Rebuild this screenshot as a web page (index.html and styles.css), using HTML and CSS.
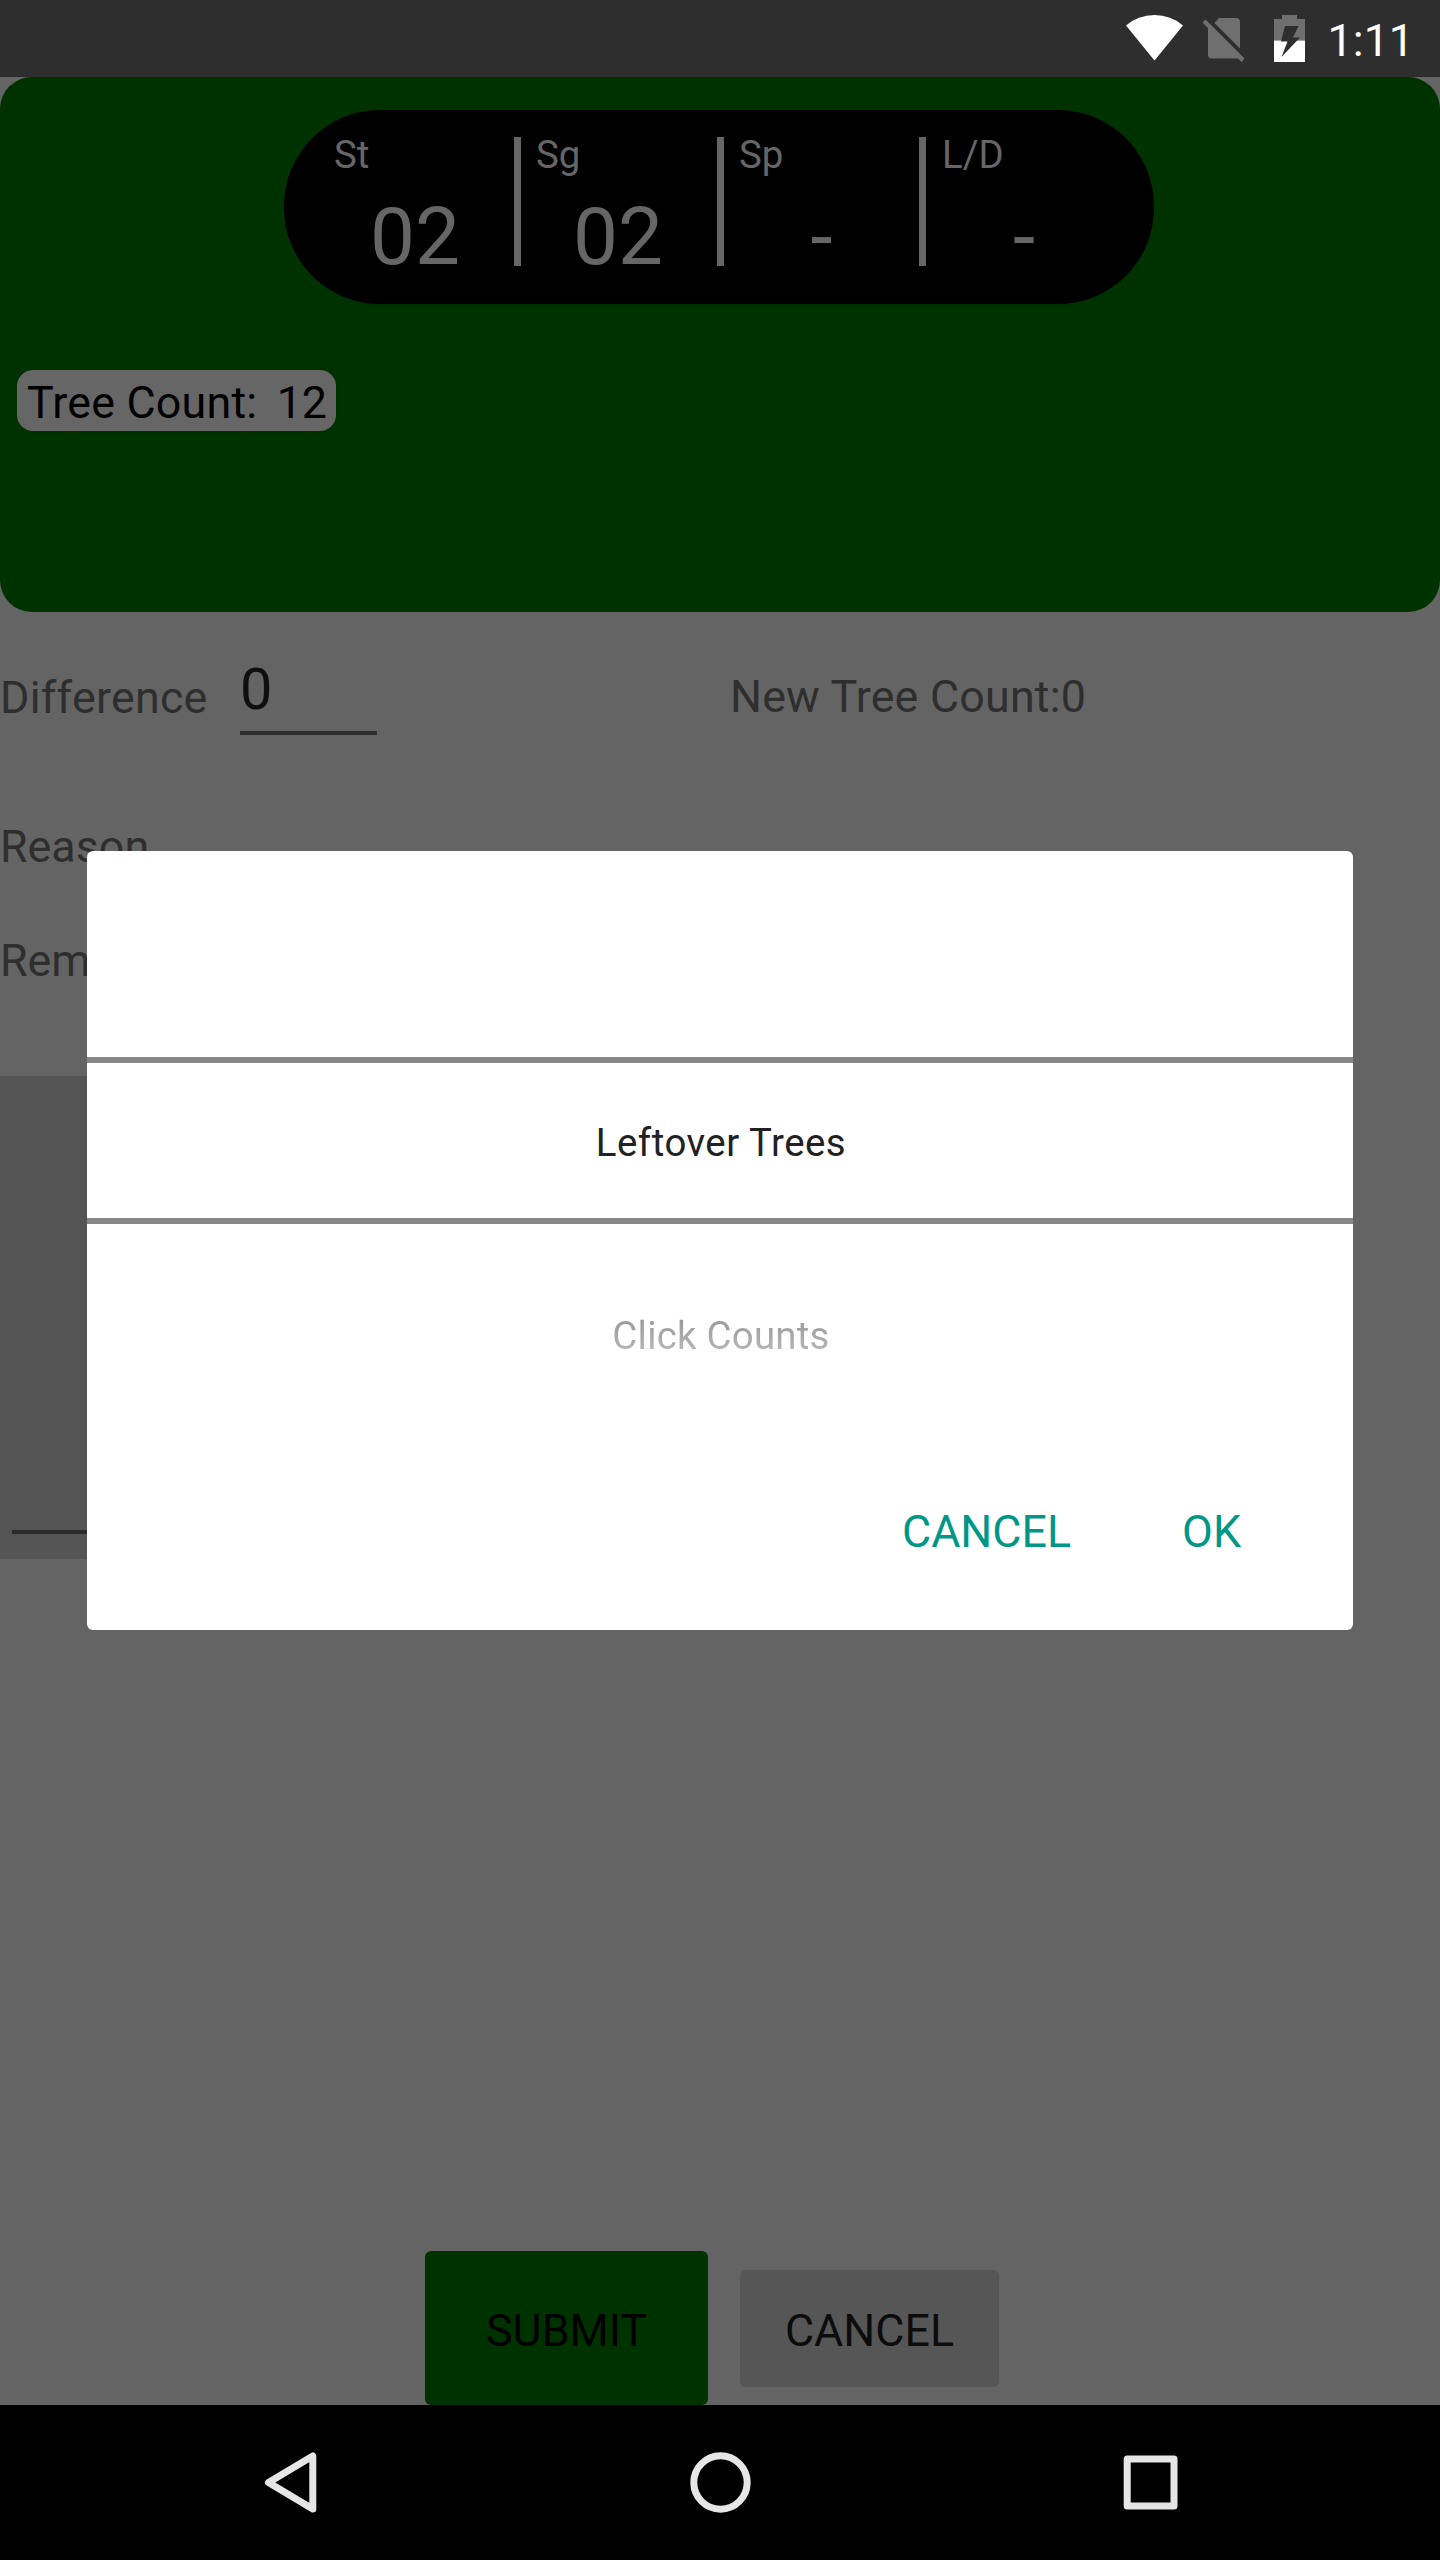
FILE: index.html
```html
<!DOCTYPE html>
<html lang="en">
<head>
<meta charset="utf-8">
<title>Tree Count</title>
<link rel="stylesheet" href="styles.css">
</head>
<body>
<div class="screen">
  <header class="status-bar">
    <svg class="status-icons" width="190" height="77" viewBox="1120 0 190 77">
      <path fill="#fff" d="M1126 25.5Q1138 15 1154.500 15Q1171 15 1183 25.500L1154.500 60.500Z"/>
      <g fill="#6f6f6f">
        <path d="M1219 18H1236Q1240 18 1240 22V48.500L1214.500 23Z"/>
        <path d="M1208 26.500L1239.500 58Q1238.500 58.500 1237 58.500H1212Q1208 58.500 1208 54.500Z"/>
        <path d="M1202.500 22.500L1205.500 19.500L1244.500 58.500L1241.500 62Z"/>
        <path d="M1274 19H1282V15H1297V19H1305V40.500H1274Z"/>
      </g>
      <path fill="#fff" d="M1274 40.500H1305V62H1274Z"/>
      <path fill="#2e2e2e" d="M1285 26H1298.500L1293 37.500H1300L1281.500 57L1287.500 41.500H1281Z"/>
    </svg>
    <span class="clock">1:11</span>
  </header>

  <main class="content">
    <section class="summary">
      <div class="pill">
        <div class="stat"><span class="stat-label">St</span><span class="stat-value">02</span></div>
        <div class="stat"><span class="stat-label">Sg</span><span class="stat-value">02</span></div>
        <div class="stat"><span class="stat-label">Sp</span><span class="stat-value">-</span></div>
        <div class="stat"><span class="stat-label">L/D</span><span class="stat-value">-</span></div>
      </div>
      <div class="chip"><span>Tree Count:</span><span>12</span></div>
    </section>

    <section class="difference-row">
      <span class="field-label">Difference</span>
      <span class="number-field">0</span>
      <span class="new-count">New Tree Count:0</span>
    </section>
    <div class="field-label reason">Reason</div>
    <div class="field-label remark">Remark</div>
    <div class="remark-box"><div class="remark-line"></div></div>

    <footer class="actions">
      <button class="btn submit">SUBMIT</button>
      <button class="btn cancel">CANCEL</button>
    </footer>
  </main>

  <nav class="nav-bar">
    <svg width="1440" height="155" viewBox="0 2405 1440 155" fill="none" stroke="#e6e6e6" stroke-width="7" stroke-linejoin="round">
      <path d="M268.500 2482.500L312.800 2456V2509Z"/>
      <circle cx="720.500" cy="2482.500" r="26.700"/>
      <rect x="1127.200" y="2459" width="46.800" height="47"/>
    </svg>
  </nav>

  <div class="dialog">
    <div class="picker">
      <div class="picker-row empty"></div>
      <div class="picker-row selected">Leftover Trees</div>
      <div class="picker-row next"><span>Click Counts</span></div>
    </div>
    <div class="dialog-actions">
      <button class="dialog-btn">CANCEL</button>
      <button class="dialog-btn">OK</button>
    </div>
  </div>
</div>
</body>
</html>
```
FILE: styles.css
```css
* { box-sizing: border-box; }

body {
  margin: 0;
  background: #646464;
  font-family: Roboto, "Liberation Sans", sans-serif;
  font-size: 44.8px;
  line-height: 60px;
  color: #2e2e2e;
}

button {
  border: 0;
  padding: 0;
  font: inherit;
}

.screen {
  position: relative;
  display: flex;
  flex-direction: column;
  width: 1440px;
  height: 2560px;
  overflow: hidden;
}

.status-bar {
  display: flex;
  justify-content: flex-end;
  height: 77px;
  padding: 0 25px 0 0;
  background: #2e2e2e;
  color: #fff;
}

.status-icons { flex: none; }

.clock {
  width: 105px;
  margin-top: 11px;
  padding-right: 1px;
  text-align: right;
}

.content {
  display: flex;
  flex: 1;
  flex-direction: column;
}

.summary {
  height: 535px;
  padding: 33px 0 0;
  border-radius: 32px;
  background: #003200;
}

.pill {
  display: grid;
  grid-template-columns: 203px 203px 202px 203px;
  width: 870px;
  height: 194px;
  margin-left: 284px;
  padding: 27px 0 38px 27px;
  border-radius: 96px;
  background: #000;
  color: #666;
}

.stat {
  display: flex;
  flex-direction: column;
  height: 129px;
  padding-right: 2px;
  border-left: 7px solid #666;
}

.stat:first-child { border-left-color: transparent; }

.stat:nth-child(3) { padding-right: 0; }

.stat:last-child { padding-right: 0; }

.stat-label {
  height: 53px;
  padding-left: 15px;
  margin-top: -8px;
  font-size: 38.4px;
  line-height: 52px;
}

.stat:first-child .stat-label,
.stat:last-child .stat-label { padding-left: 16px; }

.stat-value {
  margin-top: 9px;
  font-size: 80px;
  line-height: 94px;
  text-align: center;
}

.chip {
  display: flex;
  justify-content: space-between;
  width: 319px;
  height: 61px;
  margin: 66px 0 0 17px;
  padding: 3px 9px 0 10px;
  border-radius: 16px;
  background: #666;
  color: #000;
}

.chip span:first-child { letter-spacing: 0.2px; }

.difference-row {
  display: flex;
  align-items: flex-start;
  height: 205px;
  padding-top: 42px;
}

.difference-row .field-label {
  width: 240px;
  padding-top: 14px;
  letter-spacing: 0.25px;
}

.number-field {
  width: 137px;
  height: 81px;
  padding-top: 2px;
  border-bottom: 4px solid #2e2e2e;
  font-size: 57.6px;
  line-height: 68px;
  color: #0f0f0f;
}

.new-count {
  margin: 13px 0 0 353px;
  letter-spacing: 0.2px;
}

.reason { height: 114px; }

.remark { height: 145px; }

.remark-box {
  width: 1300px;
  height: 483px;
  padding: 454px 12px 0;
  background: #545454;
}

.remark-line {
  height: 4px;
  background: #2b2b2b;
}

.actions {
  display: flex;
  align-items: center;
  gap: 32px;
  height: 154px;
  margin: auto 0 0 425px;
}

.btn {
  padding-top: 5px;
  border-radius: 6px;
}

.submit {
  width: 283px;
  height: 154px;
  background: #003200;
  color: #000;
}

.cancel {
  width: 259px;
  height: 117px;
  background: #565656;
  color: #0c0c0c;
}

.nav-bar {
  height: 155px;
  background: #000;
}

.nav-bar svg { display: block; }

.dialog {
  position: absolute;
  top: 851px;
  left: 87px;
  width: 1266px;
  height: 779px;
  border-radius: 6px;
  background: #fff;
}

.picker-row {
  padding-left: 2px;
  font-size: 38.4px;
  line-height: 52px;
  text-align: center;
}

.picker-row.empty { height: 206px; }

.picker-row.selected {
  height: 167px;
  padding-top: 54px;
  border-top: 6px solid #888;
  border-bottom: 6px solid #888;
  letter-spacing: 0.5px;
  color: #212121;
}

.picker-row.next {
  height: 278px;
  padding-top: 86px;
  letter-spacing: 0.25px;
}

.picker-row.next span {
  background: linear-gradient(#949494, #bcbcbc);
  background-clip: text;
  color: transparent;
}

.dialog-actions {
  display: flex;
  justify-content: flex-end;
  gap: 111px;
  padding-right: 112px;
}

.dialog-btn {
  background: none;
  color: #009688;
}
```
